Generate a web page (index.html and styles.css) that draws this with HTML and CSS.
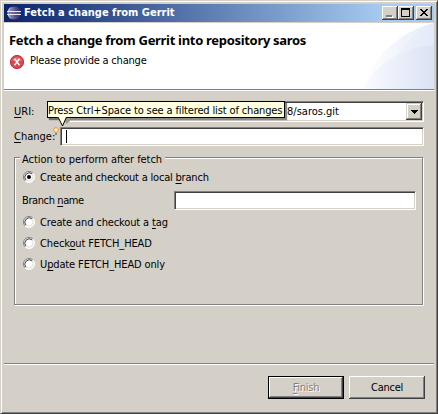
FILE: index.html
```html
<!DOCTYPE html>
<html lang="en">
<head>
<meta charset="utf-8">
<title>Fetch a change from Gerrit</title>
<link rel="stylesheet" href="styles.css">
</head>
<body>
<main class="window">
  <header class="titlebar">
    <svg class="logo" width="16" height="16" viewBox="0 0 16 16">
      <defs><linearGradient id="orb" x1="0" x2="1"><stop offset="0" stop-color="#a9a6c8"/><stop offset=".6" stop-color="#514b86"/><stop offset="1" stop-color="#27306f"/></linearGradient></defs>
      <circle cx="8.5" cy="8" r="6.5" fill="url(#orb)"/>
      <path d="M6 1.5A7 7 0 0 0 6 14.5A8 8 0 0 1 6 1.5" fill="#d8cfdc"/>
      <path d="M1 6.5H15M1 9.5H15" stroke="#e6e6f4" stroke-width="1"/>
      <path d="M2 8H14" stroke="#696397" stroke-width="1"/>
    </svg>
    <span class="caption">Fetch a change from Gerrit</span>
    <div class="controls">
      <button class="ctl" aria-label="Minimize"><svg width="16" height="14" shape-rendering="crispEdges"><path d="M5 10h6v2h-6z" fill="#fff"/><path d="M4 9h6v2h-6z" fill="#808080"/></svg></button>
      <button class="ctl" aria-label="Maximize"><svg width="16" height="14" shape-rendering="crispEdges"><path d="M3 2h9v9h-9zM4 4v6h7v-6z" fill="#000" fill-rule="evenodd"/></svg></button>
      <button class="ctl close" aria-label="Close"><svg width="16" height="14" shape-rendering="crispEdges"><path d="M4 3h2v1h1v1h2v-1h1v-1h2v1h-1v1h-1v1h-1v1h1v1h1v1h1v1h-2v-1h-1v-1h-2v1h-1v1h-2v-1h1v-1h1v-1h1v-1h-1v-1h-1v-1h-1z" fill="#000"/></svg></button>
    </div>
  </header>
  <section class="banner">
    <svg class="swoosh" width="75" height="66" viewBox="0 0 75 66">
      <defs>
        <linearGradient id="fade1" x1="0" x2="1"><stop offset="0" stop-color="#fff"/><stop offset="1" stop-color="#e5ebf8"/></linearGradient>
        <linearGradient id="fade2" x1="0" x2="1"><stop offset="0" stop-color="#fafbfe"/><stop offset="1" stop-color="#dae2f5"/></linearGradient>
      </defs>
      <path d="M3 66C14 34 39 9 75 0V66Z" fill="url(#fade1)"/>
      <path d="M24 66C34 34 48 12 75 0V66Z" fill="#dfe7f7" opacity=".25"/>
      <path d="M3 66C20 38 43 25 75 22V66Z" fill="url(#fade2)"/>
    </svg>
    <h1>Fetch a change from Gerrit into repository saros</h1>
    <p class="message"><svg width="16" height="16" viewBox="0 0 16 16"><circle cx="8" cy="8" r="6.6" fill="#df4550" stroke="#c52d3b"/><path d="M3 7A5.2 5.2 0 0 1 13 7Z" fill="#f0808a" opacity=".65"/><path d="M5.5 4.8L10.5 11.2M10.5 4.8L5.5 11.2" stroke="#fff" stroke-width="1.5"/></svg><span>Please provide a change</span></p>
  </section>
  <section class="content">
    <div class="row uri">
      <label class="t-uri"><u>U</u>RI:</label>
      <div class="field combo"><span>8/saros.git</span><button class="drop" aria-label="Open list"><svg width="7" height="4" shape-rendering="crispEdges"><path d="M0 0h7v1h-1v1h-1v1h-1v1h-1v-1h-1v-1h-1v-1h-1z"/></svg></button></div>
      <div class="tooltip"><span>Press Ctrl+Space to see a filtered list of changes</span>
        <svg width="16" height="12" viewBox="0 0 16 12"><path d="M7 2L13 2L13 5L9 8Z" fill="#999792"/><path d="M0 0L5.5 10L10 0Z" fill="#ffffe1"/><path d="M1 1L5.5 10L9.5 1" fill="none" stroke="#000"/></svg>
      </div>
    </div>
    <div class="row change">
      <label class="t-change"><u>C</u>hange:</label>
      <svg class="bulb" width="6" height="9" viewBox="0 0 6 9"><circle cx="3" cy="3" r="2.3" fill="#fff3cc" stroke="#ed932b"/><path d="M2 6h2v2H2z" fill="#77879c"/></svg>
      <div class="field edit"><i class="caret"></i></div>
    </div>
    <section class="group">
      <h2>Action to perform after fetch</h2>
      <div class="radio"><svg width="12" height="12" viewBox="0 0 12 12"><use href="#radio"/><circle cx="6" cy="6" r="2" /></svg><span class="t-local">Create and checkout a local <u>b</u>ranch</span></div>
      <div class="branch"><label class="t-name">Branch <u>n</u>ame</label><div class="field"></div></div>
      <div class="radio"><svg width="12" height="12" viewBox="0 0 12 12"><use href="#radio"/></svg><span class="t-tag">Create and checkout a <u>t</u>ag</span></div>
      <div class="radio"><svg width="12" height="12" viewBox="0 0 12 12"><use href="#radio"/></svg><span class="t-check">Check<u>o</u>ut FETCH_HEAD</span></div>
      <div class="radio"><svg width="12" height="12" viewBox="0 0 12 12"><use href="#radio"/></svg><span class="t-update">U<u>p</u>date FETCH_HEAD only</span></div>
    </section>
  </section>
  <footer>
    <button class="btn finish" disabled><span><u>F</u>inish</span></button>
    <button class="btn"><span>Cancel</span></button>
  </footer>
</main>
<svg class="defs" width="0" height="0"><defs><g id="radio"><circle cx="6" cy="6" r="5.2" fill="#fff"/><path d="M2.1 9.9A5.5 5.5 0 0 1 9.9 2.1" fill="none" stroke="#808080"/><path d="M2.9 9.1A4.4 4.4 0 0 1 9.1 2.9" fill="none" stroke="#404040"/><path d="M2.1 9.9A5.5 5.5 0 0 0 9.9 2.1" fill="none" stroke="#fff"/><path d="M2.9 9.1A4.4 4.4 0 0 0 9.1 2.9" fill="none" stroke="#dedbd5"/></g></defs></svg>
</body>
</html>
```
FILE: styles.css
```css
* { box-sizing: border-box; }
body { margin: 0; overflow: hidden; font: 11px/14px "DejaVu Sans Condensed", "DejaVu Sans", sans-serif; font-stretch: condensed; color: #000; }
svg { display: block; flex: none; }
button { font: inherit; padding: 0; border-radius: 0; color: #000; letter-spacing: -.25px; }
u { text-decoration: underline; text-underline-offset: 2px; text-decoration-thickness: 1px; text-decoration-skip-ink: none; }
.defs { position: absolute; }
.window { width: 438px; height: 414px; background: #d4d0c8; border: 1px solid; border-color: #d4d0c8 #404040 #404040 #d4d0c8; box-shadow: inset 1px 1px #fff, inset -1px -1px #808080; padding: 3px; display: flex; flex-direction: column; white-space: nowrap; }
.titlebar { height: 18px; width: 430px; flex: none; display: flex; align-items: center; padding: 0 2px; background: linear-gradient(90deg, #0a246a, #a6caf0 88%); color: #fff; font-weight: bold; }
.caption { margin-left: 2px; flex: 1; }
.controls { display: flex; }
.ctl { width: 16px; height: 14px; border: 0; background: #d4d0c8; box-shadow: inset -1px -1px #404040, inset 1px 1px #fff, inset -2px -2px #808080; }
.close { margin-left: 2px; }
.banner { height: 68px; width: 430px; margin-top: 1px; flex: none; background: #fff; border-bottom: 1px solid #fff; box-shadow: inset 0 -1px #808080; position: relative; padding: 8px 0 0 5px; }
.swoosh { position: absolute; right: 0; top: 0; }
h1 { margin: 0; font: bold 13px/18px "Noto Sans", sans-serif; letter-spacing: -.31px; position: relative; }
.message { display: flex; margin: 5px 0 0; gap: 5px; position: relative; line-height: 14px; letter-spacing: -.2px; }
.content { flex: 1; padding: 10px 10px 0 10px; width: 430px; }
.row { display: flex; position: relative; }
.uri { height: 21px; }
.row label { width: 46px; flex: none; line-height: 21px; }
.field { background: #fff; border: 1px solid; border-color: #808080 #fff #fff #808080; box-shadow: inset 1px 1px #404040, inset -1px -1px #d4d0c8; height: 19px; flex: 1; }
.combo { height: 21px; display: flex; justify-content: flex-end; line-height: 19px; padding: 1px; }
.combo span { margin-right: 67px; line-height: 17px; }
.drop { width: 16px; height: 17px; border: 0; background: #d4d0c8; box-shadow: inset -1px -1px #404040, inset 1px 1px #d4d0c8, inset -2px -2px #808080, inset 2px 2px #fff; display: grid; place-items: center; }
.tooltip { position: absolute; left: 33px; top: 0; width: 238px; height: 17px; background: #ffffe1; border: 1px solid #000; line-height: 17px; box-shadow: 2px 2px 1px #0007; letter-spacing: -.14px; }
.tooltip svg { position: absolute; left: 9px; top: 14px; }
.change { margin-top: 5px; height: 19px; }
.change label { line-height: 20px; }
.bulb { position: absolute; left: 39px; top: 0; }
.edit { padding: 2px 0 0 5px; }
.caret { display: block; width: 1px; height: 13px; background: #000; }
.group { margin-top: 11px; padding: 0 5px; border: 1px solid #808080; box-shadow: inset 1px 1px #fff, 1px 1px #fff; width: 409px; height: 148px; }
h2 { font: inherit; width: fit-content; margin: -6px 0 0; padding: 0 3px 0 2px; background: #d4d0c8; line-height: 15px; letter-spacing: -.05px; }
.radio { display: flex; align-items: center; gap: 5px; height: 21px; padding-left: 3px; letter-spacing: -.13px; }
.radio svg { margin-bottom: 1px; }
.t-local { letter-spacing: -.2px; }
.branch { display: flex; height: 24px; padding-top: 3px; line-height: 19px; }
.branch label { width: 154px; padding-left: 2px; letter-spacing: -.4px; }
.branch .field { flex: none; width: 242px; }
footer { height: 47px; width: 430px; flex: none; border-top: 1px solid #808080; box-shadow: inset 0 1px #fff; display: flex; justify-content: flex-end; gap: 5px; padding: 12px 9px 0 0; }
.btn { width: 76px; height: 23px; background: #d4d0c8; border: 0; box-shadow: inset -1px -1px #404040, inset 1px 1px #fff, inset -2px -2px #808080; }
.finish { color: #808080; text-shadow: 1px 1px #fff; border: 1px solid #000; }
```
